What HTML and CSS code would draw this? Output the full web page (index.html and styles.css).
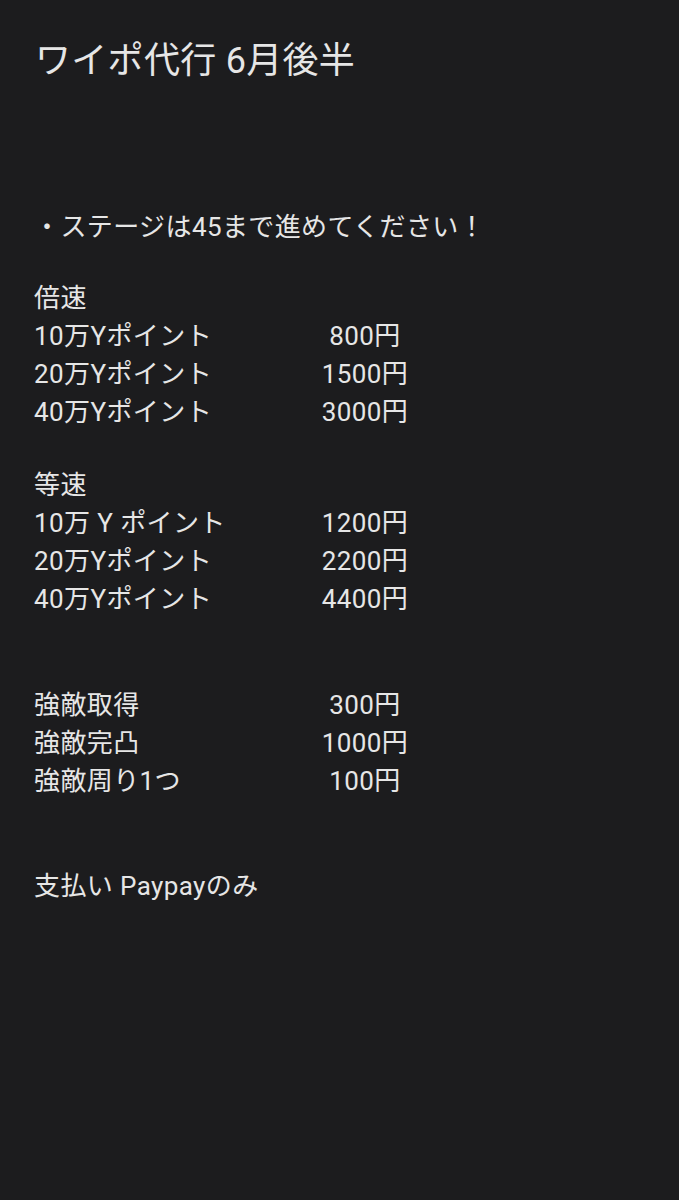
FILE: index.html
```html
<!DOCTYPE html>
<html lang="ja">
<head>
<meta charset="utf-8">
<link rel="stylesheet" href="styles.css">
</head>
<body>
<main class="note">
  <h1 class="title">ワイポ代行 6月後半</h1>
  <p class="line bullet">・ステージは45まで進めてください！</p>

  <section class="group first">
    <div class="line head">倍速</div>
    <div class="price-grid">
      <span class="line">10万Yポイント</span><span class="line price">800円</span>
      <span class="line">20万Yポイント</span><span class="line price">1500円</span>
      <span class="line">40万Yポイント</span><span class="line price">3000円</span>
    </div>
  </section>

  <section class="group">
    <div class="line head">等速</div>
    <div class="price-grid">
      <span class="line">10万 Y ポイント</span><span class="line price">1200円</span>
      <span class="line">20万Yポイント</span><span class="line price">2200円</span>
      <span class="line">40万Yポイント</span><span class="line price">4400円</span>
    </div>
  </section>

  <section class="group wide">
    <div class="price-grid">
      <span class="line">強敵取得</span><span class="line price">300円</span>
      <span class="line">強敵完凸</span><span class="line price">1000円</span>
      <span class="line">強敵周り1つ</span><span class="line price">100円</span>
    </div>
  </section>

  <p class="line pay">支払い Paypayのみ</p>
</main>
</body>
</html>
```

FILE: styles.css
```css
html, body {
  margin: 0;
  padding: 0;
  background: #1c1c1e;
}

body {
  width: 679px;
  min-height: 1200px;
  color: #e6e6e6;
  font-family: "Roboto", "Noto Sans CJK JP", sans-serif;
}

.note {
  padding: 36px 0 0 34px;
}

.title {
  margin: 0 0 0 1px;
  font-size: 36px;
  font-weight: 400;
  line-height: 50px;
  letter-spacing: 0.3px;
}

.line {
  display: block;
  font-size: 26px;
  line-height: 38px;
  letter-spacing: 0.4px;
  white-space: pre;
}

.bullet {
  margin: 122px 0 0 0;
}

.group {
  margin-top: 33px;
}

.group + .group {
  margin-top: 35px;
}

.group.wide {
  margin-top: 68px;
}

.price-grid {
  display: grid;
  grid-template-columns: 281px 100px;
}

.price {
  text-align: center;
}

.pay {
  margin: 67px 0 0 0;
}
```
